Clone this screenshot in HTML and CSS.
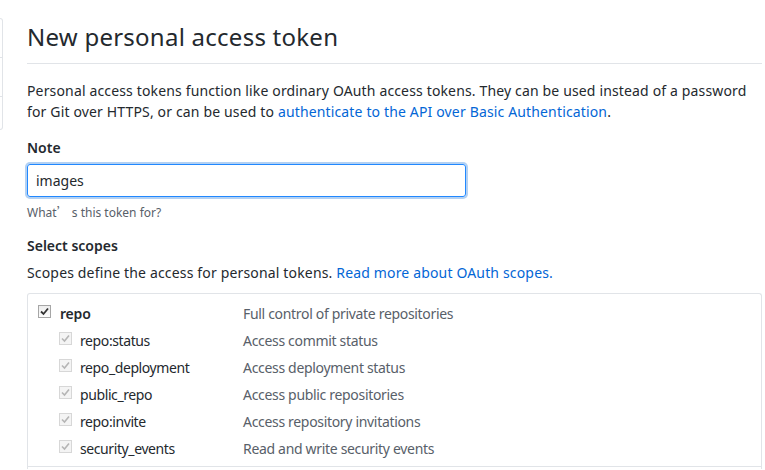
FILE: index.html
```html
<!DOCTYPE html>
<html>
<head>
<meta charset="utf-8">
<link rel="stylesheet" href="styles.css">
</head>
<body>
<div class="layout">
  <nav class="sidebar">
    <div class="side-item"></div>
    <div class="side-item"></div>
    <div class="side-item last"></div>
  </nav>
  <main class="main">
    <h1 class="title">New personal access token</h1>
    <p class="intro">Personal access tokens function like ordinary OAuth access tokens. They can be used instead of a password for Git over HTTPS, or can be used to <a href="#">authenticate to the API over Basic Authentication</a>.</p>
    <div class="field">
      <label class="label">Note</label>
      <div class="input">images</div>
      <p class="hint">What<span class="cjk">’</span> s this token for?</p>
    </div>
    <h3 class="label scopes-title">Select scopes</h3>
    <p class="scopes-desc">Scopes define the access for personal tokens. <a href="#">Read more about OAuth scopes.</a></p>
    <div class="scope-box">
      <div class="group">
        <div class="row top">
          <span class="cb"><svg viewBox="0 0 13 13" width="13" height="13"><path d="M3 6.5 L5.5 9 L10 3.5" fill="none" stroke="#333" stroke-width="1.8"/></svg></span>
          <span class="name bold">repo</span>
          <span class="desc">Full control of private repositories</span>
        </div>
        <div class="row sub">
          <span class="cb dis"><svg viewBox="0 0 13 13" width="13" height="13"><path d="M3 6.5 L5.5 9 L10 3.5" fill="none" stroke="#b5b5b5" stroke-width="1.6"/></svg></span>
          <span class="name">repo:status</span>
          <span class="desc">Access commit status</span>
        </div>
        <div class="row sub">
          <span class="cb dis"><svg viewBox="0 0 13 13" width="13" height="13"><path d="M3 6.5 L5.5 9 L10 3.5" fill="none" stroke="#b5b5b5" stroke-width="1.6"/></svg></span>
          <span class="name">repo_deployment</span>
          <span class="desc">Access deployment status</span>
        </div>
        <div class="row sub">
          <span class="cb dis"><svg viewBox="0 0 13 13" width="13" height="13"><path d="M3 6.5 L5.5 9 L10 3.5" fill="none" stroke="#b5b5b5" stroke-width="1.6"/></svg></span>
          <span class="name">public_repo</span>
          <span class="desc">Access public repositories</span>
        </div>
        <div class="row sub">
          <span class="cb dis"><svg viewBox="0 0 13 13" width="13" height="13"><path d="M3 6.5 L5.5 9 L10 3.5" fill="none" stroke="#b5b5b5" stroke-width="1.6"/></svg></span>
          <span class="name">repo:invite</span>
          <span class="desc">Access repository invitations</span>
        </div>
        <div class="row sub">
          <span class="cb dis"><svg viewBox="0 0 13 13" width="13" height="13"><path d="M3 6.5 L5.5 9 L10 3.5" fill="none" stroke="#b5b5b5" stroke-width="1.6"/></svg></span>
          <span class="name">security_events</span>
          <span class="desc">Read and write security events</span>
        </div>
      </div>
      <div class="group next"></div>
    </div>
  </main>
</div>
</body>
</html>
```
FILE: styles.css
```css
* { box-sizing: border-box; }
html, body { margin: 0; padding: 0; background: #fff; overflow: hidden; }
body {
  font-family: "Noto Sans", "Open Sans", sans-serif;
  font-size: 14px;
  color: #24292e;
  width: 765px;
  height: 470px;
}
a { color: #0366d6; text-decoration: none; }
.layout { display: flex; align-items: flex-start; }
.sidebar {
  width: 3px;
  margin-top: 18px;
  border: 1px solid #e1e4e8;
  border-left: none;
  border-radius: 0 3px 3px 0;
}
.side-item { height: 39px; border-bottom: 1px solid #e1e4e8; }
.side-item.last { border-bottom: none; height: 32px; }
.main { margin-left: 24px; width: 735px; }
.title {
  margin: 0;
  padding-top: 22px;
  padding-bottom: 11px;
  font-size: 24px;
  font-weight: 400;
  line-height: 30px;
  letter-spacing: 0.25px;
  border-bottom: 1px solid #e1e4e8;
}
.intro { margin: 16px 0 0; line-height: 21px; letter-spacing: 0.15px; }
.field { margin-top: 15px; }
.label { display: block; font-weight: 600; font-size: 14px; line-height: 21px; margin: 0; }
.input {
  margin-top: 6px;
  width: 439px;
  height: 33px;
  border: 1px solid #2188ff;
  border-radius: 3px;
  box-shadow: 0 0 0 2px rgba(3,102,214,0.3);
  padding: 0 8px;
  line-height: 31px;
  font-size: 14px;
}
.hint { margin: 7px 0 0; font-size: 12px; line-height: 16px; color: #586069; }
.cjk { font-family: "Noto Sans CJK SC", sans-serif; }
.scopes-title { margin-top: 14px; }
.scopes-desc { margin: 6px 0 0; line-height: 21px; letter-spacing: 0.16px; }
.scope-box {
  margin-top: 10px;
  border: 1px solid #e1e4e8;
  border-bottom: none;
  border-radius: 3px 3px 0 0;
  height: 176px;
}
.group { padding: 6px 10px 4px; border-bottom: 1px solid #e1e4e8; }
.row { display: flex; align-items: center; height: 27px; }
.cb {
  width: 13px; height: 13px;
  border: 1px solid #a6a6a6;
  background: linear-gradient(#ededed, #fcfcfc);
  display: flex; align-items: center; justify-content: center;
  margin-top: -4px;
}
.cb svg { display: block; margin: -1px; }
.cb.dis { border-color: #d7d7d7; background: #f4f4f4; }
.name { letter-spacing: -0.4px; }
.row.top .name { margin-left: 9px; width: 183px; letter-spacing: -0.2px; }
.row.sub { padding-left: 21px; }
.row.sub .name { margin-left: 8px; width: 163px; }
.bold { font-weight: 600; }
.desc { color: #586069; letter-spacing: -0.32px; }
```
